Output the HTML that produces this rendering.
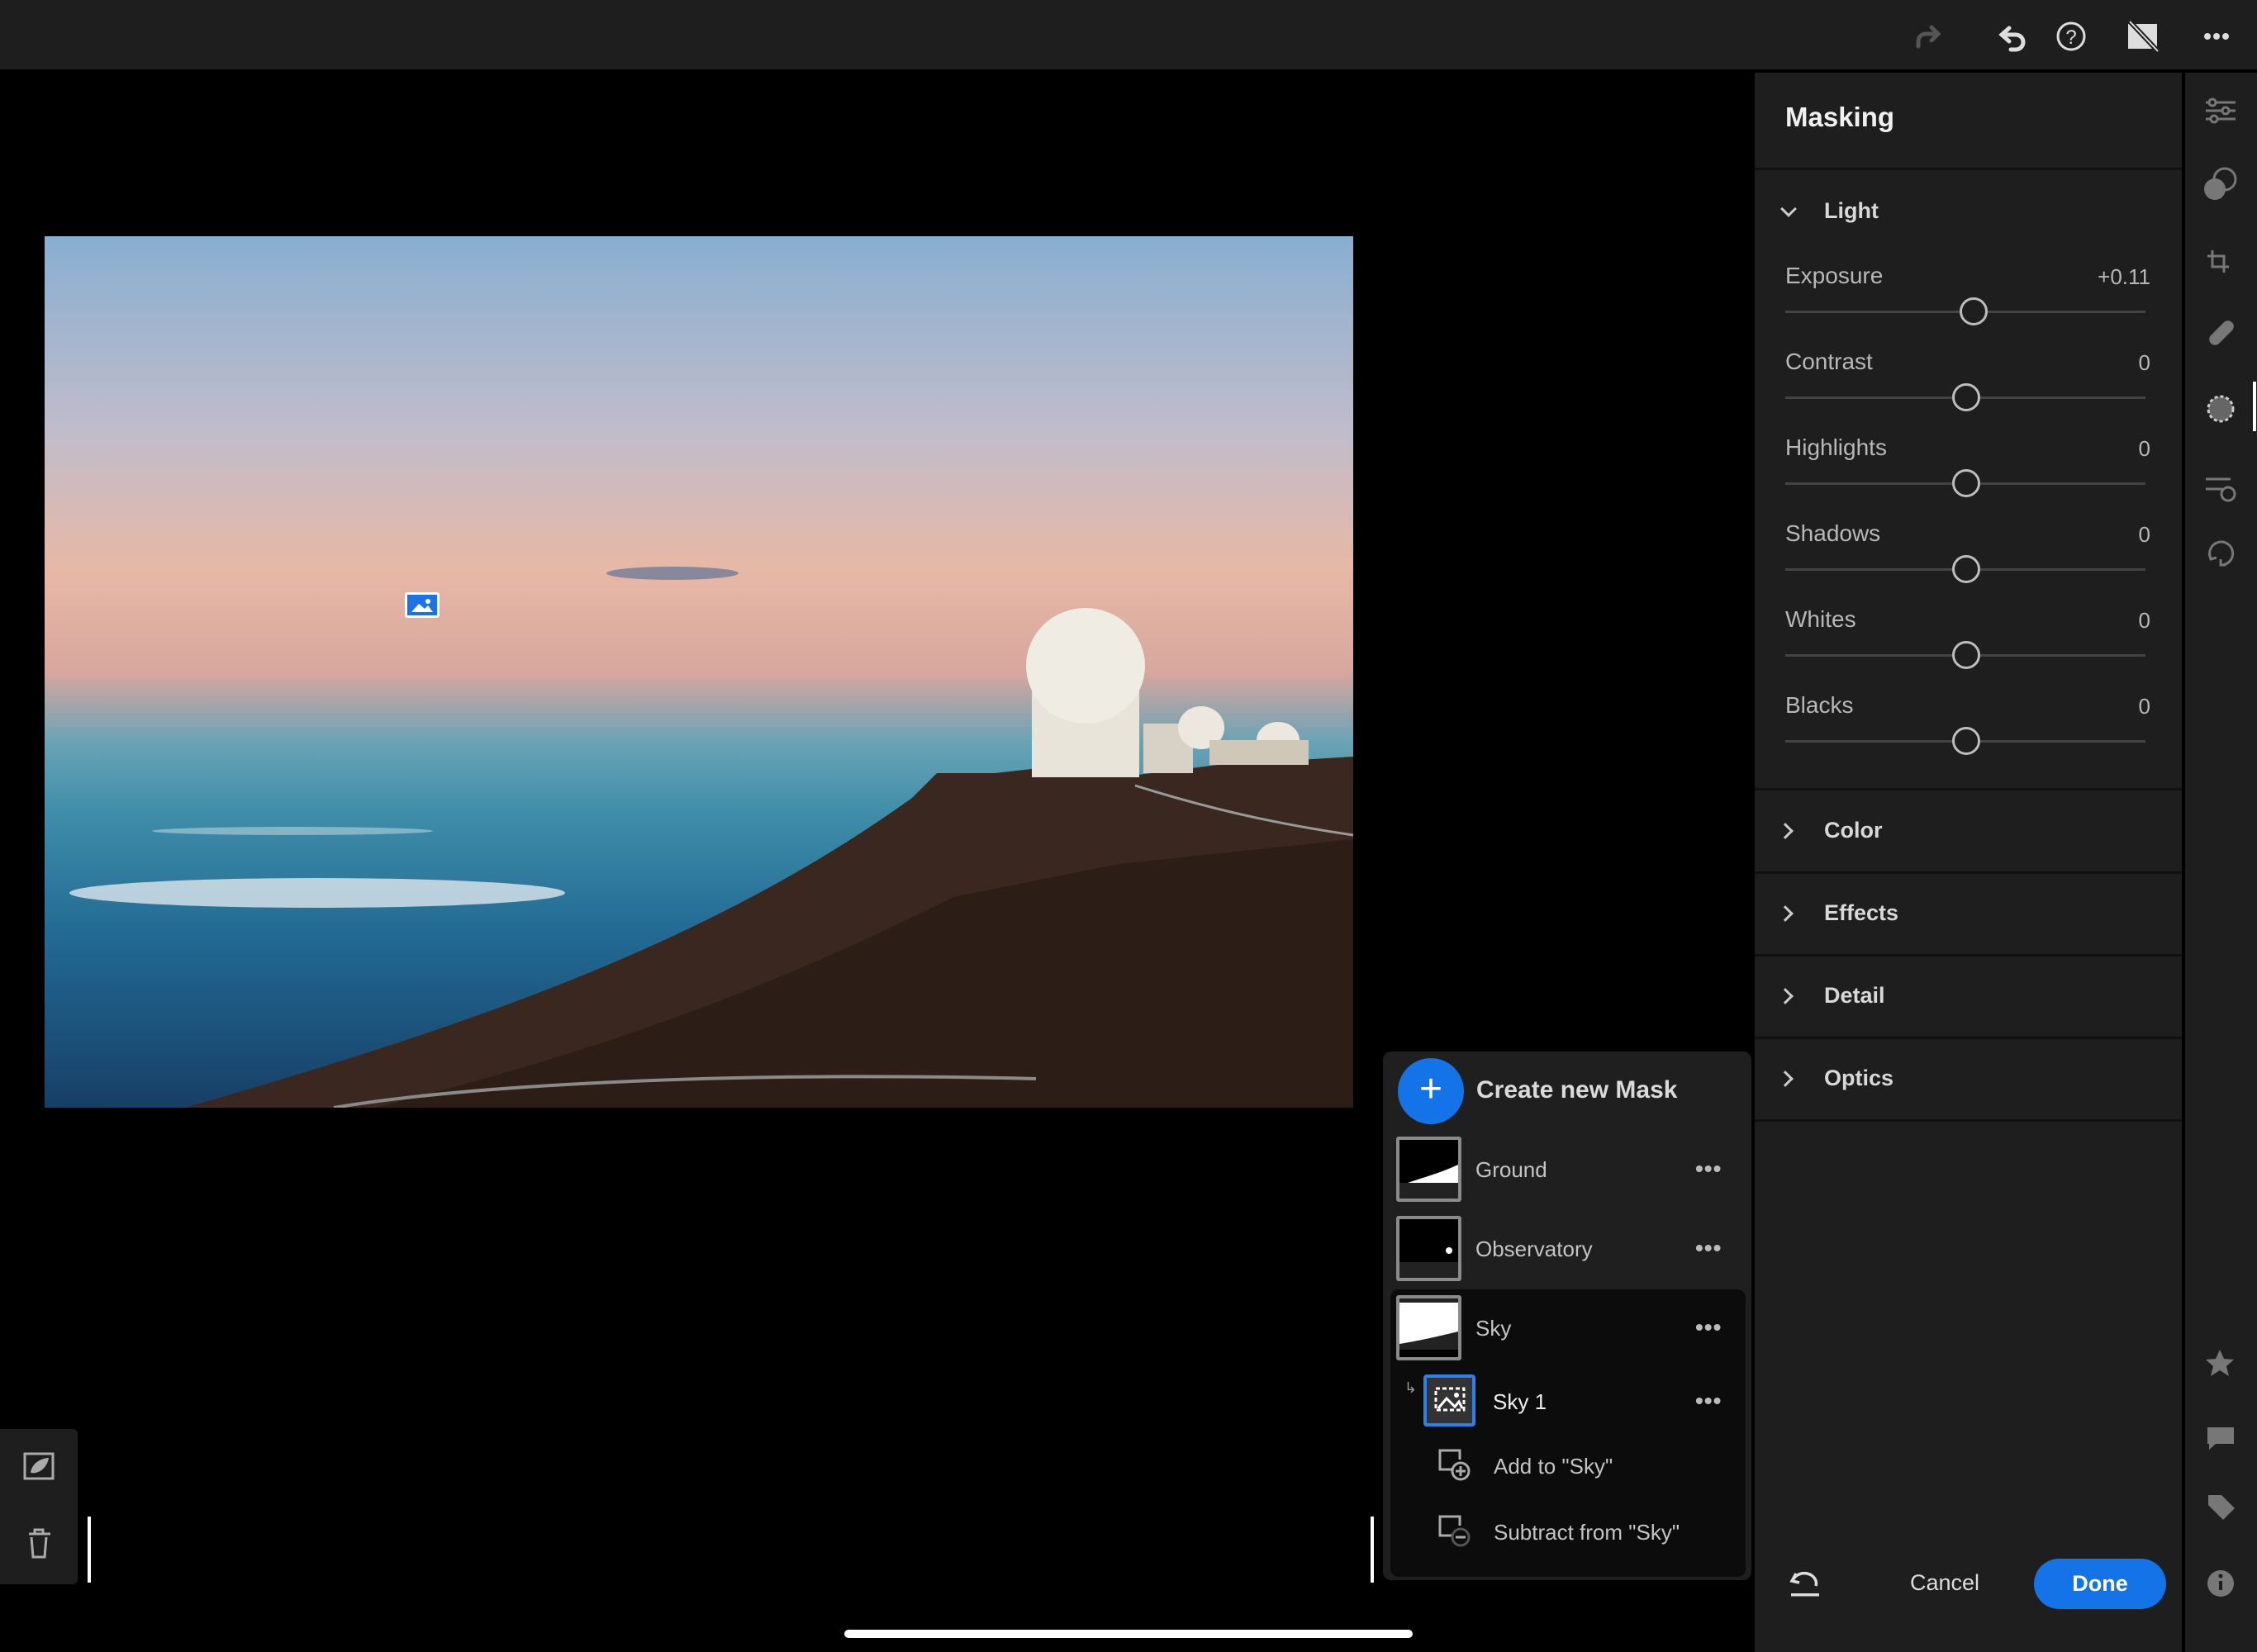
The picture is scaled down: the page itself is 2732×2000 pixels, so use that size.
<!DOCTYPE html>
<html><head><meta charset="utf-8"><style>
*{margin:0;padding:0;box-sizing:border-box}
body{width:2732px;height:2000px;background:#000;position:relative;overflow:hidden;font-family:"Liberation Sans",sans-serif;color:#c8c8c8}
.abs{position:absolute}
.top{left:0;top:0;width:2732px;height:86px;background:#1e1e1e;border-bottom:2px solid #000}
.panel{left:2124px;top:88px;width:517px;height:1912px;background:#1e1e1e}
.rail{left:2643px;top:88px;width:89px;height:1912px;background:#1e1e1e;border-left:2px solid #000}
.div{position:absolute;left:0;width:517px;height:3px;background:#111}
.lbl{position:absolute;left:37px;font-size:28px;color:#b8b8b8}
.val{position:absolute;right:38px;font-size:26px;color:#b8b8b8}
.track{position:absolute;left:37px;width:436px;height:3px;background:#444}
.knob{position:absolute;width:34px;height:34px;border:3px solid #bdbdbd;border-radius:50%;background:#1e1e1e}
.sec{position:absolute;left:84px;font-size:27px;font-weight:bold;color:#d8d8d8}
.chev{position:absolute;left:34px;width:14px;height:14px;border-right:3px solid #ccc;border-bottom:3px solid #ccc}
.mask{left:1674px;top:1273px;width:446px;height:640px;background:#1f1f1f;border-radius:10px}
.thumb{position:absolute;left:16px;width:79px;height:79px;border:4px solid #8a8a8a;border-radius:3px;background:#000;overflow:hidden}
.mt{position:absolute;font-size:26px;color:#c4c4c4}
.dots{position:absolute;left:378px;font-size:28px;color:#bbb;letter-spacing:1px;font-weight:bold}
</style></head><body>
<div class="abs top"></div>
<svg class="abs" style="left:2300px;top:20px" width="420" height="50" viewBox="0 0 420 50">
 <g fill="none" stroke-width="5" stroke-linecap="round">
  <path d="M22 36 v-6 a9 9 0 0 1 9 -9 h14 M38 13 l8 8 -8 8" stroke="#555"/>
  <path d="M132 14 l-9 8 9 8 M124 22 h16 a9 9 0 0 1 0 18 h-6" stroke="#ddd"/>
  <circle cx="207" cy="24" r="16" stroke="#ddd" stroke-width="3"/>
 </g>
 <text x="207" y="33" font-size="24" text-anchor="middle" fill="#ddd" font-family="Liberation Sans">?</text>
 <rect x="276" y="9" width="35" height="30" fill="#ddd"/>
 <path d="M278 6 L312 42" stroke="#1e1e1e" stroke-width="6"/>
 <path d="M278 6 L312 42" stroke="#ddd" stroke-width="2"/>
 <circle cx="372" cy="24" r="4" fill="#ddd"/><circle cx="383" cy="24" r="4" fill="#ddd"/><circle cx="394" cy="24" r="4" fill="#ddd"/>
</svg>

<svg class="abs" style="left:54px;top:286px" width="1584" height="1055" viewBox="0 0 1584 1055" preserveAspectRatio="none">
 <defs>
  <linearGradient id="sky" x1="0" y1="0" x2="0" y2="1">
   <stop offset="0" stop-color="#88aed0"/>
   <stop offset="0.22" stop-color="#c0bccb"/>
   <stop offset="0.38" stop-color="#e7b8a6"/>
   <stop offset="0.5" stop-color="#d8a79e"/>
   <stop offset="0.58" stop-color="#6aa3b6"/>
   <stop offset="0.66" stop-color="#3f8eaa"/>
   <stop offset="0.8" stop-color="#226a94"/>
   <stop offset="1" stop-color="#173f66"/>
  </linearGradient>
 </defs>
 <rect width="1584" height="1055" fill="url(#sky)"/>
 <ellipse cx="330" cy="795" rx="300" ry="18" fill="#dfe8ee" opacity="0.8"/>
 <ellipse cx="300" cy="720" rx="170" ry="5" fill="#cfdfe8" opacity="0.5"/>
 <ellipse cx="760" cy="408" rx="80" ry="8" fill="#6f7c99" opacity="0.8"/>
 <path d="M170 1055 C500 960 800 860 1050 680 L1080 650 L1150 650 L1240 640 L1300 655 L1420 640 L1584 630 L1584 1055 Z" fill="#3a2820"/>
 <path d="M400 1055 C700 980 900 900 1100 800 L1300 760 L1584 730 L1584 1055 Z" fill="#2c1d17"/>
 <rect x="1195" y="520" width="130" height="135" fill="#e8e4da"/>
 <ellipse cx="1260" cy="520" rx="72" ry="70" fill="#efece4"/>
 <rect x="1330" y="590" width="60" height="60" fill="#d8d2c6"/>
 <ellipse cx="1400" cy="595" rx="28" ry="26" fill="#ece8e0"/>
 <ellipse cx="1493" cy="610" rx="26" ry="22" fill="#ece8e0"/>
 <rect x="1410" y="610" width="120" height="30" fill="#cfc7b8"/>
 <path d="M1320 665 C1400 690 1480 710 1584 725" stroke="#9a9a9a" stroke-width="3" fill="none"/>
 <path d="M350 1055 C500 1030 800 1010 1200 1020" stroke="#8a8a8a" stroke-width="4" fill="none"/>
</svg>
<div class="abs" style="left:490px;top:717px;width:42px;height:31px;border:3px solid #fff;background:#1a73e8;border-radius:3px"></div>
<svg class="abs" style="left:496px;top:723px" width="30" height="20"><path d="M2 18 L11 8 L18 14 L22 10 L28 18 Z" fill="#fff"/><circle cx="22" cy="5" r="3" fill="#fff"/></svg>

<div class="abs panel">
 <div style="position:absolute;left:37px;top:35px;font-size:33px;font-weight:bold;color:#f0f0f0">Masking</div>
 <div class="div" style="top:115px"></div>
 <div class="chev" style="top:158px;transform:rotate(45deg)"></div>
 <div class="sec" style="top:152px">Light</div>

 <div class="lbl" style="top:230px">Exposure</div><div class="val" style="top:232px">+0.11</div>
 <div class="track" style="top:288px"></div><div class="knob" style="left:248px;top:272px"></div>
 <div class="lbl" style="top:334px">Contrast</div><div class="val" style="top:336px">0</div>
 <div class="track" style="top:392px"></div><div class="knob" style="left:239px;top:376px"></div>
 <div class="lbl" style="top:438px">Highlights</div><div class="val" style="top:440px">0</div>
 <div class="track" style="top:496px"></div><div class="knob" style="left:239px;top:480px"></div>
 <div class="lbl" style="top:542px">Shadows</div><div class="val" style="top:544px">0</div>
 <div class="track" style="top:600px"></div><div class="knob" style="left:239px;top:584px"></div>
 <div class="lbl" style="top:646px">Whites</div><div class="val" style="top:648px">0</div>
 <div class="track" style="top:704px"></div><div class="knob" style="left:239px;top:688px"></div>
 <div class="lbl" style="top:750px">Blacks</div><div class="val" style="top:752px">0</div>
 <div class="track" style="top:808px"></div><div class="knob" style="left:239px;top:792px"></div>

 <div class="div" style="top:866px"></div>
 <div class="chev" style="top:911px;left:30px;transform:rotate(-45deg)"></div><div class="sec" style="top:902px">Color</div>
 <div class="div" style="top:967px"></div>
 <div class="chev" style="top:1011px;left:30px;transform:rotate(-45deg)"></div><div class="sec" style="top:1002px">Effects</div>
 <div class="div" style="top:1067px"></div>
 <div class="chev" style="top:1111px;left:30px;transform:rotate(-45deg)"></div><div class="sec" style="top:1102px">Detail</div>
 <div class="div" style="top:1167px"></div>
 <div class="chev" style="top:1211px;left:30px;transform:rotate(-45deg)"></div><div class="sec" style="top:1202px">Optics</div>
 <div class="div" style="top:1267px"></div>

 <svg style="position:absolute;left:42px;top:1813px" width="40" height="34"><path d="M8 4 l-5 9 9 2 M4 13 a14 12 0 0 1 28 6" stroke="#ddd" stroke-width="3.5" fill="none"/><rect x="2" y="28" width="34" height="3.5" fill="#ddd"/></svg>
 <div style="position:absolute;left:188px;top:1813px;font-size:27px;color:#ddd">Cancel</div>
 <div style="position:absolute;left:338px;top:1799px;width:160px;height:61px;background:#1473e6;border-radius:31px;color:#fff;font-size:27px;font-weight:bold;text-align:center;line-height:61px">Done</div>
</div>

<div class="abs rail"></div>
<svg class="abs" style="left:2643px;top:88px" width="89" height="1912">
 <g stroke="#777" stroke-width="3" fill="none">
  <path d="M27 36 h36 M27 46 h36 M27 56 h36"/><circle cx="35" cy="36" r="4" fill="#1e1e1e"/><circle cx="51" cy="46" r="4" fill="#1e1e1e"/><circle cx="37" cy="56" r="4" fill="#1e1e1e"/>
  <circle cx="50" cy="129" r="13"/>
  <path d="M35 215 v20 h20 M29 222 h20 v20"/>
 </g>
 <circle cx="38" cy="141" r="13" fill="#777"/>
 <rect x="28" y="308" width="36" height="14" rx="7" fill="#777" transform="rotate(-45 46 315)"/>
 <circle cx="45" cy="407" r="15" fill="#666" stroke="#ccc" stroke-width="3" stroke-dasharray="4 3"/>
 <rect x="84" y="374" width="4" height="60" fill="#fff"/>
 <g stroke="#777" stroke-width="3" fill="none"><path d="M27 492 h30 M27 504 h20"/><circle cx="54" cy="510" r="8"/><path d="M45 596 a14 14 0 1 0 -12 -8 M31 582 l2 7 7 -2 M45 589 v7 h6"/></g>
 <path d="M44 1546 l5 11 12 1 -9 8 3 12 -11 -7 -11 7 3 -12 -9 -8 12 -1z" fill="#777"/>
 <path d="M29 1640 h32 v20 h-22 l-8 7 v-7 h-2z" fill="#777"/>
 <path d="M30 1722 h16 l16 16 -14 14 -18 -18z" fill="#777"/>
 <circle cx="45" cy="1829" r="16" fill="#777"/><rect x="43" y="1826" width="4" height="11" fill="#1e1e1e"/><circle cx="45" cy="1820" r="2.5" fill="#1e1e1e"/>
</svg>

<div class="abs mask">
 <div style="position:absolute;left:18px;top:8px;width:80px;height:80px;border-radius:50%;background:#1473e6;color:#fff;font-size:48px;line-height:76px;text-align:center">+</div>
 <div style="position:absolute;left:113px;top:30px;font-size:30px;font-weight:bold;color:#dadada">Create new Mask</div>
 <div class="thumb" style="top:103px"><svg width="71" height="71"><rect y="10" width="71" height="42" fill="#000"/><path d="M10 52 C30 45 50 40 71 30 V52Z" fill="#fff"/><rect y="52" width="71" height="19" fill="#222"/></svg></div>
 <div class="mt" style="left:112px;top:128px">Ground</div><div class="dots" style="top:126px">•••</div>
 <div class="thumb" style="top:199px"><svg width="71" height="71"><rect y="0" width="71" height="52" fill="#000"/><circle cx="60" cy="38" r="4" fill="#fff"/><rect y="52" width="71" height="19" fill="#222"/></svg></div>
 <div class="mt" style="left:112px;top:224px">Observatory</div><div class="dots" style="top:222px">•••</div>
 <div style="position:absolute;left:9px;top:288px;width:430px;height:348px;background:#0c0c0c;border-radius:10px"></div>
 <div class="thumb" style="top:295px"><svg width="71" height="71"><rect y="0" width="71" height="62" fill="#222"/><path d="M0 5 H71 V40 C50 45 30 50 0 55Z" fill="#fff"/></svg></div>
 <div class="mt" style="left:112px;top:320px">Sky</div><div class="dots" style="top:318px">•••</div>
 <div style="position:absolute;left:26px;top:397px;font-size:18px;color:#999">↳</div>
 <div style="position:absolute;left:49px;top:391px;width:63px;height:63px;border:4px solid #2f7fe8;border-radius:4px;background:#333"></div>
 <svg style="position:absolute;left:62px;top:406px" width="38" height="32"><rect x="2" y="2" width="34" height="26" fill="none" stroke="#fff" stroke-width="3" stroke-dasharray="5 3"/><path d="M5 26 L15 14 L25 24 L30 18 L34 26" stroke="#fff" stroke-width="3" fill="none"/><circle cx="27" cy="10" r="3" fill="#fff"/></svg>
 <div class="mt" style="left:133px;top:409px;color:#eee">Sky 1</div><div class="dots" style="top:407px">•••</div>
 <svg style="position:absolute;left:66px;top:480px" width="44" height="40"><path d="M20 26 H3 V3 H27 V14" stroke="#aaa" stroke-width="3" fill="none"/><circle cx="28" cy="28" r="10" stroke="#aaa" stroke-width="3" fill="#0c0c0c"/><path d="M22 28 h12 M28 22 v12" stroke="#aaa" stroke-width="3"/></svg>
 <div class="mt" style="left:134px;top:487px">Add to "Sky"</div>
 <svg style="position:absolute;left:66px;top:560px" width="44" height="40"><path d="M20 26 H3 V3 H27 V14" stroke="#aaa" stroke-width="3" fill="none"/><circle cx="28" cy="28" r="10" stroke="#555" stroke-width="3" fill="#0c0c0c"/><path d="M22 28 h12" stroke="#aaa" stroke-width="3"/></svg>
 <div class="mt" style="left:134px;top:567px">Subtract from "Sky"</div>
</div>

<div class="abs" style="left:0;top:1730px;width:94px;height:188px;background:#1e1e1e;border-radius:0 6px 6px 0"></div>
<svg class="abs" style="left:27px;top:1757px" width="40" height="130"><rect x="3" y="3" width="34" height="30" fill="none" stroke="#aaa" stroke-width="3"/><path d="M10 26 C12 12 26 8 32 8 C30 20 20 28 10 26Z" fill="#aaa"/><path d="M8 100 h26 M15 100 v-5 h10 v5 M11 104 l2 24 h14 l2 -24" stroke="#aaa" stroke-width="3" fill="none"/></svg>
<div class="abs" style="left:106px;top:1836px;width:4px;height:80px;background:#fff"></div>
<div class="abs" style="left:1659px;top:1836px;width:4px;height:80px;background:#fff"></div>
<div class="abs" style="left:1022px;top:1973px;width:688px;height:10px;background:#fff;border-radius:5px"></div>
</body></html>
